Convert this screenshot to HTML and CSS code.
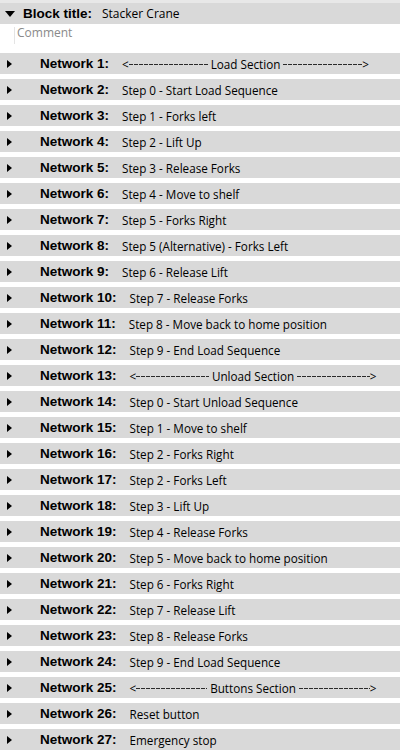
FILE: index.html
```html
<!DOCTYPE html>
<html>
<head>
<meta charset="utf-8">
<link rel="stylesheet" href="styles.css">
</head>
<body>
<div class="top-strip"></div>
<div class="block-head">
  <span class="tri-down"></span>
  <span class="block-label">Block title:</span>
  <span class="block-name">Stacker Crane</span>
</div>
<div class="comment"><span class="comment-text">Comment</span></div>
<div class="networks">
  <div class="net"><span class="tri"></span><span class="lbl">Network 1:</span><span class="desc sec"><span>&lt;</span><span class="line"></span><span class="sec-name">Load Section</span><span class="line"></span><span>&gt;</span></span></div>
  <div class="net"><span class="tri"></span><span class="lbl">Network 2:</span><span class="desc">Step 0 - Start Load Sequence</span></div>
  <div class="net"><span class="tri"></span><span class="lbl">Network 3:</span><span class="desc">Step 1 - Forks left</span></div>
  <div class="net"><span class="tri"></span><span class="lbl">Network 4:</span><span class="desc">Step 2 - Lift Up</span></div>
  <div class="net"><span class="tri"></span><span class="lbl">Network 5:</span><span class="desc">Step 3 - Release Forks</span></div>
  <div class="net"><span class="tri"></span><span class="lbl">Network 6:</span><span class="desc">Step 4 - Move to shelf</span></div>
  <div class="net"><span class="tri"></span><span class="lbl">Network 7:</span><span class="desc">Step 5 - Forks Right</span></div>
  <div class="net"><span class="tri"></span><span class="lbl">Network 8:</span><span class="desc">Step 5 (Alternative) - Forks Left</span></div>
  <div class="net"><span class="tri"></span><span class="lbl">Network 9:</span><span class="desc">Step 6 - Release Lift</span></div>
  <div class="net"><span class="tri"></span><span class="lbl">Network 10:</span><span class="desc">Step 7 - Release Forks</span></div>
  <div class="net"><span class="tri"></span><span class="lbl">Network 11:</span><span class="desc">Step 8 - Move back to home position</span></div>
  <div class="net"><span class="tri"></span><span class="lbl">Network 12:</span><span class="desc">Step 9 - End Load Sequence</span></div>
  <div class="net"><span class="tri"></span><span class="lbl">Network 13:</span><span class="desc sec"><span>&lt;</span><span class="line"></span><span class="sec-name">Unload Section</span><span class="line"></span><span>&gt;</span></span></div>
  <div class="net"><span class="tri"></span><span class="lbl">Network 14:</span><span class="desc">Step 0 - Start Unload Sequence</span></div>
  <div class="net"><span class="tri"></span><span class="lbl">Network 15:</span><span class="desc">Step 1 - Move to shelf</span></div>
  <div class="net"><span class="tri"></span><span class="lbl">Network 16:</span><span class="desc">Step 2 - Forks Right</span></div>
  <div class="net"><span class="tri"></span><span class="lbl">Network 17:</span><span class="desc">Step 2 - Forks Left</span></div>
  <div class="net"><span class="tri"></span><span class="lbl">Network 18:</span><span class="desc">Step 3 - Lift Up</span></div>
  <div class="net"><span class="tri"></span><span class="lbl">Network 19:</span><span class="desc">Step 4 - Release Forks</span></div>
  <div class="net"><span class="tri"></span><span class="lbl">Network 20:</span><span class="desc">Step 5 - Move back to home position</span></div>
  <div class="net"><span class="tri"></span><span class="lbl">Network 21:</span><span class="desc">Step 6 - Forks Right</span></div>
  <div class="net"><span class="tri"></span><span class="lbl">Network 22:</span><span class="desc">Step 7 - Release Lift</span></div>
  <div class="net"><span class="tri"></span><span class="lbl">Network 23:</span><span class="desc">Step 8 - Release Forks</span></div>
  <div class="net"><span class="tri"></span><span class="lbl">Network 24:</span><span class="desc">Step 9 - End Load Sequence</span></div>
  <div class="net"><span class="tri"></span><span class="lbl">Network 25:</span><span class="desc sec"><span>&lt;</span><span class="line"></span><span class="sec-name">Buttons Section</span><span class="line"></span><span>&gt;</span></span></div>
  <div class="net"><span class="tri"></span><span class="lbl">Network 26:</span><span class="desc">Reset button</span></div>
  <div class="net"><span class="tri"></span><span class="lbl">Network 27:</span><span class="desc">Emergency stop</span></div>
</div>
</body>
</html>
```
FILE: styles.css
```css
html, body {
  margin: 0;
  padding: 0;
  background: #ffffff;
  width: 400px;
  overflow: hidden;
}
body {
  font-family: "Open Sans", "DejaVu Sans", sans-serif;
  color: #000;
}
.top-strip {
  height: 3px;
  background: #e8e8e8;
}
.block-head {
  height: 21px;
  background: #d9d9d9;
  display: flex;
  align-items: center;
}
.tri-down {
  width: 0;
  height: 0;
  margin-left: 5px;
  border-top: 6px solid #000;
  border-left: 5px solid transparent;
  border-right: 5px solid transparent;
}
.block-label {
  margin-left: 8px;
  font-family: "Liberation Sans", Arial, sans-serif;
  font-weight: bold;
  font-size: 13.5px;
  color: #000;
}
.block-name {
  margin-left: 10px;
  font-size: 12px;
}
.comment {
  height: 29px;
  box-sizing: border-box;
  padding-top: 3px;
  padding-left: 14px;
  display: flex;
  align-items: flex-start;
}
.comment-text {
  display: block;
  border-left: 1px solid #e4e4e4;
  padding-left: 2px;
  height: 17px;
  line-height: 12px;
  font-size: 12px;
  color: #8a8a8a;
}
.networks {
  display: flex;
  flex-direction: column;
  gap: 5px;
}
.net {
  height: 21px;
  background: #d9d9d9;
  display: flex;
  align-items: center;
}
.tri {
  width: 0;
  height: 0;
  margin-left: 7px;
  border-left: 5px solid #000;
  border-top: 4.5px solid transparent;
  border-bottom: 4.5px solid transparent;
}
.lbl {
  margin-left: 28px;
  font-family: "Liberation Sans", Arial, sans-serif;
  font-weight: bold;
  font-size: 13.5px;
  color: #000;
}
.desc {
  margin-left: 13px;
  font-size: 11.7px;
}
.sec {
  display: flex;
  align-items: center;
  width: 247px;
}
.line {
  flex: 1;
  height: 1px;
  margin-top: 1px;
  background: repeating-linear-gradient(90deg, #2a2a2a 0 4px, transparent 4px 5px);
}
.sec-name {
  margin: 0 3px;
}
```
